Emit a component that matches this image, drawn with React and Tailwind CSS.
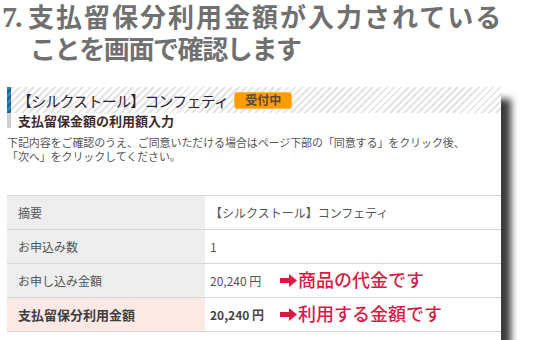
import React from 'react';

const jp = '[font-family:"Noto_Sans_CJK_JP","Liberation_Sans",sans-serif]';
const serif = '[font-family:"Liberation_Serif","Noto_Sans_CJK_JP",serif]';

// thick red arrow used by the annotations
const RedArrow = () => (
  <svg width="17" height="13" viewBox="0 0 17 13" className="shrink-0">
    <path d="M0 4h9V0l8 6.5-8 6.5V9H0z" fill="#d81b45" />
  </svg>
);

const Note = ({ children }) => (
  <span className="flex items-center gap-[1px]">
    <RedArrow />
    <span className={`${serif} text-[18px] font-medium text-[#d81b45] leading-none`}>{children}</span>
  </span>
);

const rows = [
  { label: '摘要', value: '【シルクストール】コンフェティ' },
  { label: 'お申込み数', value: '1' },
  { label: 'お申し込み金額', value: '20,240 円', note: '商品の代金です' },
  { label: '支払留保分利用金額', value: '20,240 円', note: '利用する金額です', strong: true },
];

export default function App() {
  return (
    <div className={`w-[550px] h-[340px] bg-white overflow-hidden ${jp}`}>
      {/* Page heading */}
      <h1 className={`${serif} pl-[2px] text-[26px] leading-[34px] font-bold text-[#707070]`}>
        <div className="flex items-baseline h-[34px] overflow-hidden">
          <span className="w-[26px] text-[30px] leading-[34px] tracking-[-2px]">7.</span>
          <span className="tracking-[2px]">支払留保分利用金額が入力されている</span>
        </div>
        <div className="pl-[28px] tracking-[-1.4px]">ことを画面で確認します</div>
      </h1>

      {/* Screenshot panel */}
      <div className="mt-[19px] ml-[7px] w-[494px] h-[300px] bg-white shadow-[10px_12px_7px_#3c3c3c]">
        <div className="flex items-center h-[26px] bg-[repeating-linear-gradient(135deg,#ffffff_0px,#ffffff_3px,#e4e4e4_3px,#e4e4e4_5px)]">
          <div className="w-[4px] self-stretch bg-[repeating-linear-gradient(135deg,#2f86c4_0px,#2f86c4_3px,#1b5f94_3px,#1b5f94_5px)]" />
          <span className="ml-[6px] text-[15px] leading-none text-[#2a2636] tracking-[-0.8px]">【シルクストール】コンフェティ</span>
          <span className="ml-[6px] h-[17px] px-[10px] flex items-center rounded-[3px] bg-[#ff9a00] border border-[#ffb64a] text-[12px] font-bold text-[#5a4a3a] leading-none">
            受付中
          </span>
        </div>
        <div className="flex items-center h-[15px]">
          <div className="w-[4px] self-stretch bg-[#cfcfcf]" />
          <span className="ml-[7px] text-[13px] leading-none font-bold text-[#3e2a2c]">支払留保金額の利用額入力</span>
        </div>

        <p className="mt-[7px] text-[11px] leading-[14px] text-[#555] tracking-[-0.1px]">
          下記内容をご確認のうえ、ご同意いただける場合はページ下部の「同意する」をクリック後、
          <br />
          「次へ」をクリックしてください。
        </p>

        <table className="mt-[32px] w-full border-collapse text-[12px] text-[#555]">
          <tbody>
            {rows.map((r) => (
              <tr key={r.label} className="h-[34px] border-y border-[#d6d6d6]">
                <td
                  className={`w-[198px] pl-[11px] ${
                    r.strong ? 'bg-[#fbe9e5] font-bold text-[13px] text-[#3e3e3e]' : 'bg-[#eeeeee]'
                  }`}
                >
                  {r.label}
                </td>
                <td className={`pl-[5px] ${r.strong ? 'font-bold text-[#444]' : ''}`}>
                  <div className="flex items-center">
                    <span className={r.note ? 'w-[70px]' : ''}>{r.value}</span>
                    {r.note && <Note>{r.note}</Note>}
                  </div>
                </td>
              </tr>
            ))}
          </tbody>
        </table>
      </div>
    </div>
  );
}
